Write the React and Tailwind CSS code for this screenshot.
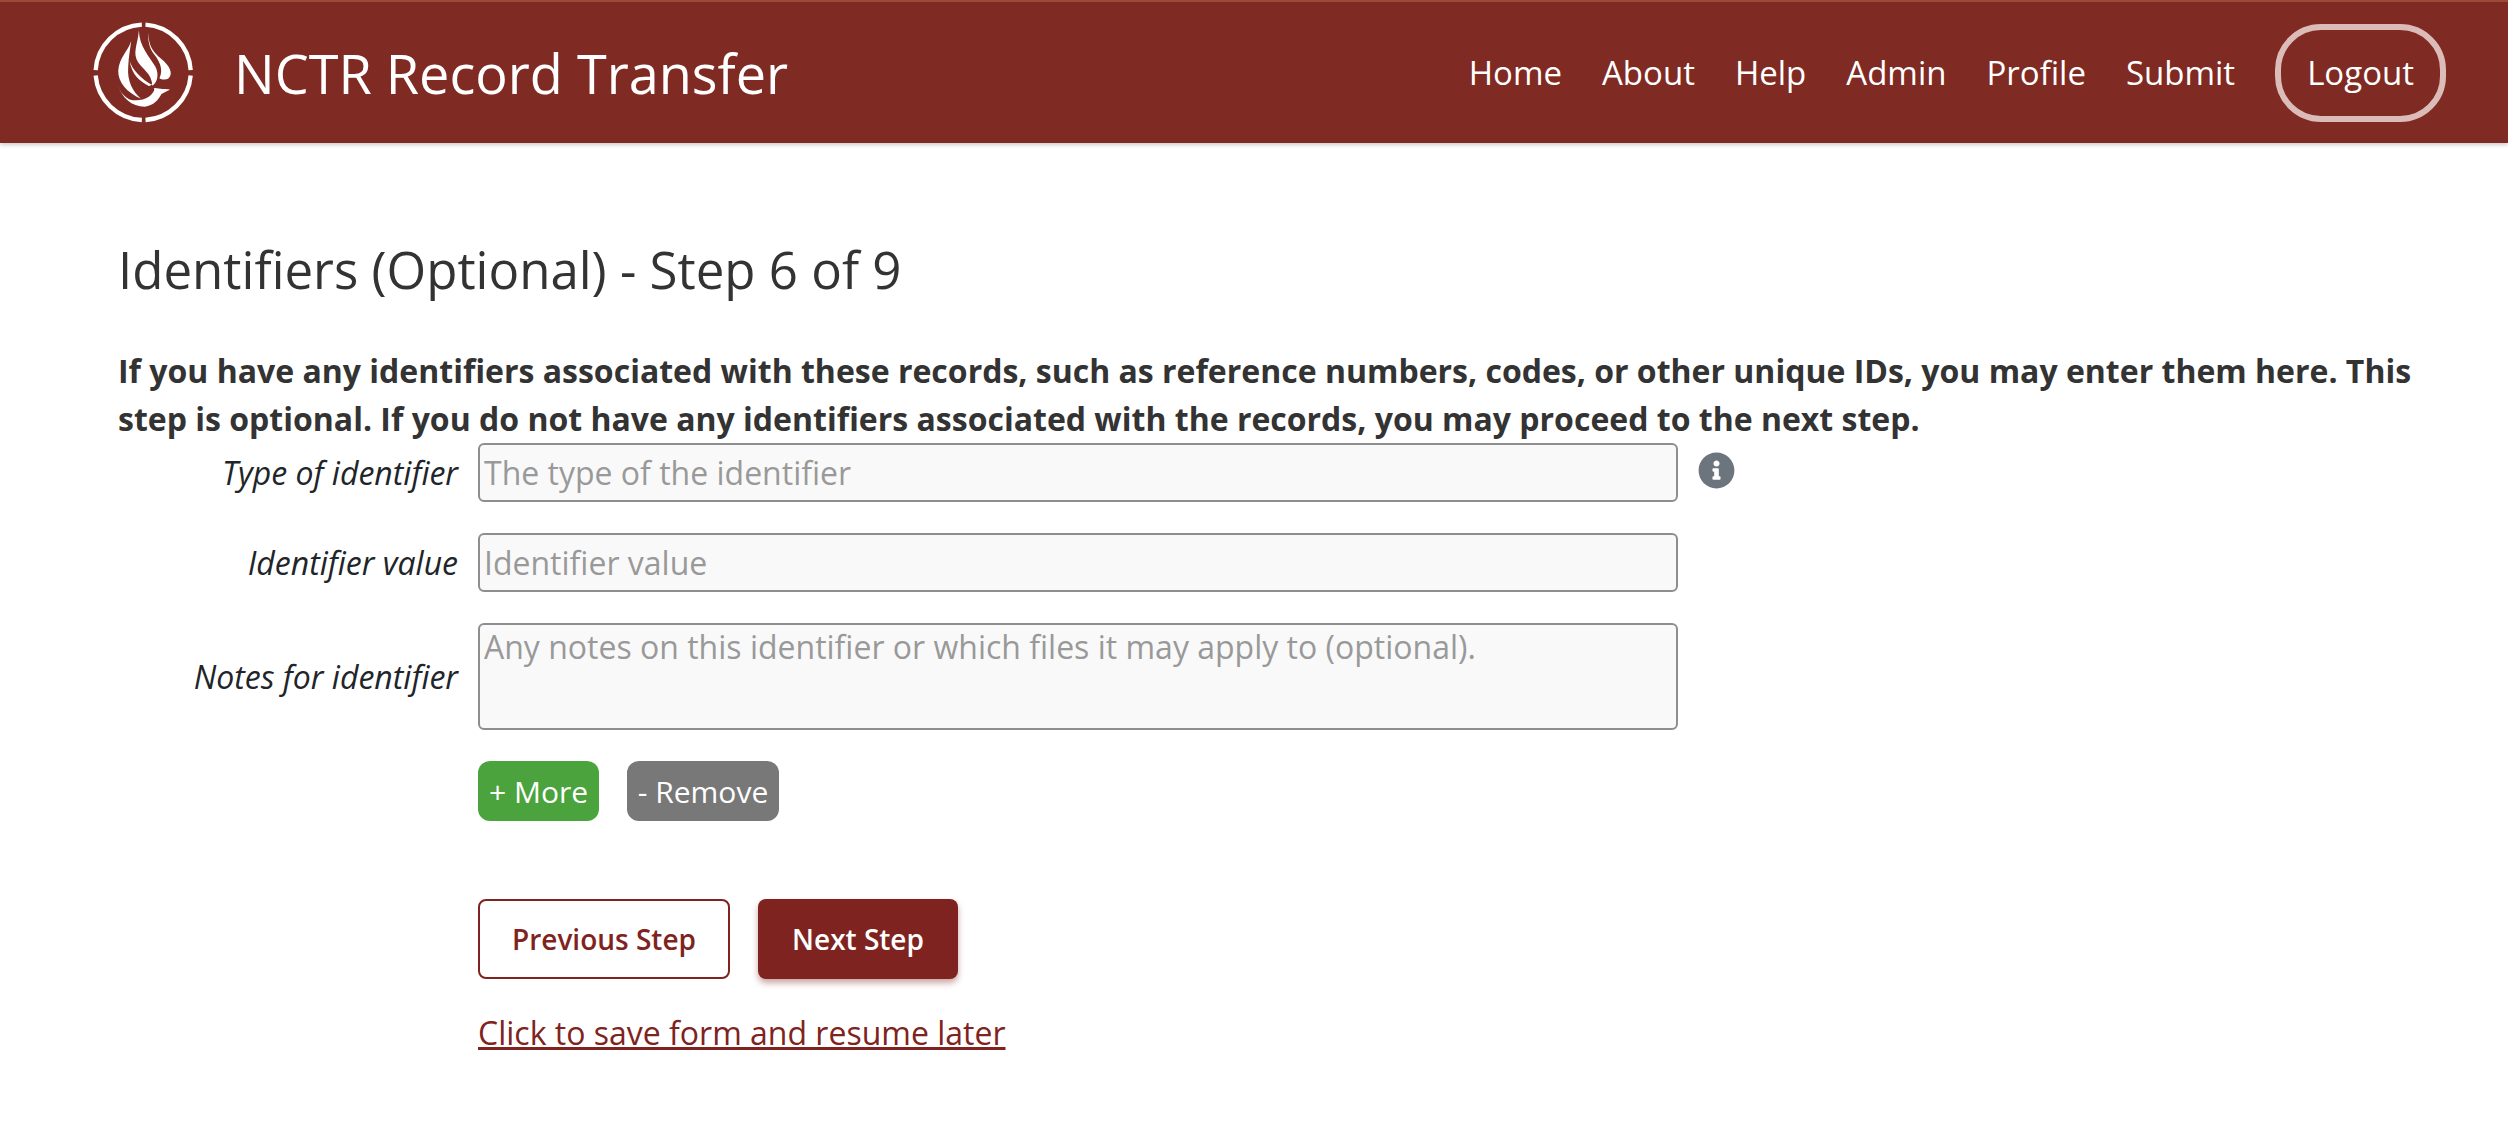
import React from 'react'
import { FaInfoCircle } from 'react-icons/fa'

const navItems = ['Home', 'About', 'Help', 'Admin', 'Profile', 'Submit']

const Logo = () => (
    <svg viewBox="70 35 304 304" className="w-[101px] h-[101px] shrink-0" fill="white">
        <g fill="none" stroke="white" strokeWidth="13">
            <path d="M217 43 A 146 146 0 0 0 78 180" />
            <path d="M228 43 A 146 146 0 0 1 364 180" />
            <path d="M78 196 A 146 146 0 0 0 217 330" />
            <path d="M228 330 A 146 146 0 0 0 364 196" />
        </g>
        <path d="M185 92 C 176 122 148 142 146 182 C 145 216 172 248 214 266 C 190 244 172 214 176 170 C 177 140 182 116 185 92 Z" />
        <path d="M208 60 C 206 92 196 112 198 136 C 202 168 240 182 246 212 C 250 222 246 226 238 228 C 214 214 186 196 180 150 C 186 176 214 206 250 226 C 266 214 268 190 258 170 C 238 136 210 110 208 60 Z" />
        <path d="M238 68 C 236 100 246 122 276 146 C 300 166 314 190 296 206 C 288 210 274 208 270 204 C 284 176 268 150 252 130 C 240 112 234 90 238 68 Z" />
        <path d="M146 226 C 156 262 186 290 226 290 C 252 288 268 268 276 252 C 286 246 296 242 302 238 C 282 238 262 234 254 234 C 256 244 248 252 238 260 C 222 270 200 274 180 268 C 164 260 152 246 146 226 Z" />
    </svg>
)

const Field = ({ label, children, side }) => (
    <div className="flex items-center">
        <label className="w-[340px] mr-5 text-right italic text-[32px] text-[#212529]">{label}</label>
        <div className="w-[1200px]">{children}</div>
        {side}
    </div>
)

const inputClass = 'block w-full border-2 border-[#8e8e8e] rounded-md bg-[#f9f9f9] px-1 text-[32px] text-[#333] placeholder:text-[#999] outline-none'

const App = () => {
    return (
        <div className="min-h-[1122px] bg-white text-[#333] font-['Open_Sans',sans-serif]">
            <header className="h-[143px] flex items-center justify-between pl-[93px] pr-[62px] bg-[#7f2a22] border-t-2 border-[#9a4a36] shadow-[0_2px_4px_rgba(0,0,0,0.2)]">
                <div className="flex items-center gap-[40px]">
                    <Logo />
                    <span className="text-white text-[54px] leading-none">NCTR Record Transfer</span>
                </div>
                <nav className="flex items-center text-white text-[33px]">
                    {navItems.map((item) => (
                        <a key={item} className="mr-[40px]">{item}</a>
                    ))}
                    <a className="h-[98px] px-[26px] flex items-center border-[6px] border-[#dcbcb8] rounded-[46px]">Logout</a>
                </nav>
            </header>
            <main className="pl-[118px] pr-[60px]">
                <h1 className="pt-[92px] text-[51px] leading-[68px] text-[#333]">Identifiers (Optional) - Step 6 of 9</h1>
                <p className="mt-[44px] font-bold text-[32px] leading-[48px] text-[#333]">
                    If you have any identifiers associated with these records, such as reference numbers, codes, or other unique IDs, you may enter them here. This step is optional. If you do not have any identifiers associated with the records, you may proceed to the next step.
                </p>
                <div className="flex flex-col gap-[31px]">
                    <Field label="Type of identifier" side={<FaInfoCircle size={37} className="ml-[20px] -mt-[4px] fill-[#6c757d]" />}>
                        <input className={inputClass + ' h-[59px]'} placeholder="The type of the identifier" />
                    </Field>
                    <Field label="Identifier value">
                        <input className={inputClass + ' h-[59px]'} placeholder="Identifier value" />
                    </Field>
                    <Field label="Notes for identifier">
                        <textarea className={inputClass + ' h-[107px] resize-none leading-[44px]'} placeholder="Any notes on this identifier or which files it may apply to (optional)." />
                    </Field>
                </div>
                <div className="ml-[360px] mt-[31px] flex flex-col items-start">
                    <div className="flex gap-[28px] text-white text-[30px]">
                        <button className="h-[60px] w-[121px] rounded-xl bg-[#4aa33d]">+ More</button>
                        <button className="h-[60px] w-[152px] rounded-xl bg-[#787878]">- Remove</button>
                    </div>
                    <div className="flex gap-[28px] mt-[78px] font-semibold text-[28px]">
                        <button className="h-[80px] w-[252px] rounded-lg border-2 border-[#7f2320] text-[#7f2320] bg-white">Previous Step</button>
                        <button className="h-[80px] w-[200px] rounded-lg bg-[#7f2320] text-white shadow-[0_4px_6px_rgba(127,35,32,0.4)]">Next Step</button>
                    </div>
                    <a className="mt-[30px] text-[32px] text-[#7f2320] underline">Click to save form and resume later</a>
                </div>
            </main>
        </div>
    )
}

export default App
